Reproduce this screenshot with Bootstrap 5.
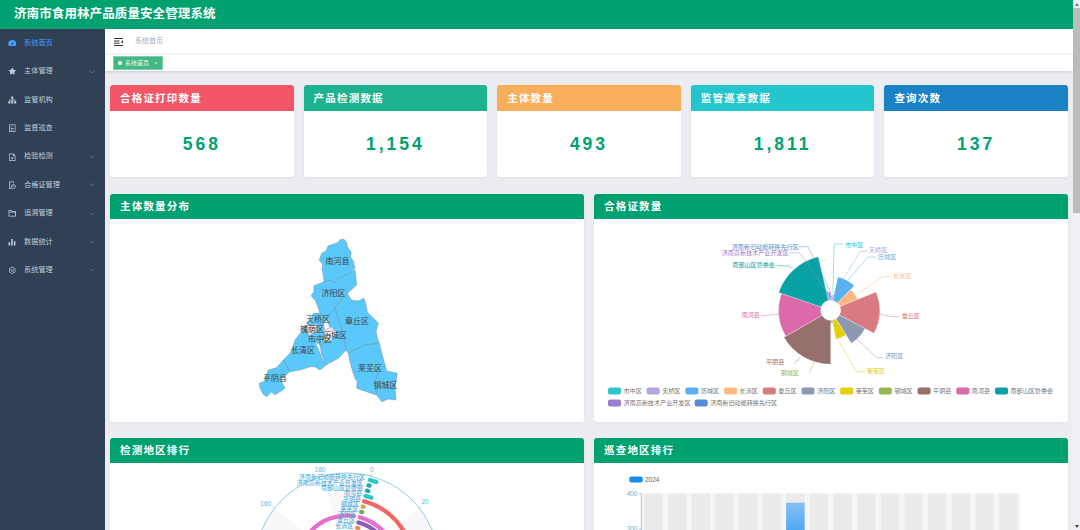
<!DOCTYPE html>
<html lang="zh-CN">
<head>
    <meta charset="UTF-8">
    <title>济南市食用林产品质量安全管理系统</title>
    <link href="https://cdn.jsdelivr.net/npm/bootstrap@5.3.0/dist/css/bootstrap.min.css" rel="stylesheet">
    <style>
        html, body { height: 530px; overflow: hidden; }
        body { font-family: "Liberation Sans", "Noto Sans CJK SC", sans-serif; background: #fff; }
        .page-wrap { height: 530px; width: 1080px; }
        .page-main { width: 1073px; }
        .scroll-rail { width: 7px; height: 530px; background: #f0f0f3; }
        .scroll-thumb { height: 205px; background: #bcbcbc; }
        .scroll-btn { height: 8px; font-size: 0; }
        .scroll-up { width: 0; height: 0; border: 2px solid transparent; border-bottom: 3px solid #777; border-top: 0; }
        .scroll-down { width: 0; height: 0; border: 2px solid transparent; border-top: 3px solid #444; border-bottom: 0; }
        .top-head { height: 29px; background: #00a170; color: #fff; font-size: 12.5px; font-weight: 700; line-height: 28px; padding-left: 14px; letter-spacing: .1px; }
        .side-menu { width: 105px; background: #304156; height: 501px; }
        .side-item { height: 28.4px; color: #bfcbd9; font-size: 7.2px; padding-left: 8px; gap: 7.500px; }
        .side-item.on { color: #409eff; }
        .side-item svg.ic { width: 8.500px; height: 8.500px; flex: none; fill: currentColor; }
        .side-item .arr { margin-left: auto; margin-right: 10px; width: 6px; height: 4px; }
        .crumb-bar { height: 25px; padding-left: 9px; gap: 12px; color: #a4b1c4; font-size: 7px; }
        .tag-bar { height: 17px; padding-left: 8px; border-top: 1px solid #f2f2f2; box-shadow: 0 1px 3px rgba(0,0,0,.14); position: relative; }
        .tag-on { height: 14px; width: 50px; background: #42b983; color: #e9f7f0; font-size: 6px; gap: 3px; padding-left: 4px; border: 1px solid #7fd0ab; }
        .tag-dot { width: 4px; height: 4px; background: #fff; border-radius: 50%; }
        .tag-x { font-size: 6px; margin-left: 2px; opacity: .8; }
        .content-area { background: #ebedf2; padding: 14px 5px 0 5px; height: 459px; overflow: hidden; }
        .stat-row { gap: 10px; margin-bottom: 17px; }
        .stat-box { flex: 1 1 0; height: 92px; background: #fff; border-radius: 3px; overflow: hidden; box-shadow: 0 1px 3px rgba(0,0,0,.05); }
        .stat-head { height: 26px; color: #fff; font-size: 10.500px; font-weight: 700; line-height: 26px; padding-left: 10px; letter-spacing: 1.200px; }
        .stat-num { height: 66px; color: #00a170; font-size: 17.500px; font-weight: 700; letter-spacing: 3px; }
        .chart-row { gap: 10px; margin-bottom: 16px; }
        .chart-box { flex: 1 1 0; background: #fff; border-radius: 3px; overflow: hidden; box-shadow: 0 1px 3px rgba(0,0,0,.05); }
        .chart-head { height: 25px; background: #00a170; color: #fff; font-size: 10.500px; font-weight: 700; line-height: 25px; padding-left: 10px; letter-spacing: 1.200px; }
        .chart-box svg { display: block; }
        .bg-a { background: #f25767; }
        .bg-b { background: #1eb38e; }
        .bg-c { background: #f9ae5b; }
        .bg-d { background: #22c6cc; }
        .bg-e { background: #1c82c6; }
        svg text { font-family: "Liberation Sans", "Noto Sans CJK SC", sans-serif; }
    </style>
</head>
<body>
<div class="page-wrap d-flex">
    <div class="page-main">
        <div class="top-head">济南市食用林产品质量安全管理系统</div>
        <div class="d-flex">
            <div class="side-menu">
                <div class="side-item on d-flex align-items-center"><svg class="ic" viewBox="0 0 16 16"><path d="M8 2a7.500 7.500 0 0 0-7.500 7.500c0 1.200.3 2.400.9 3.500h13.200c.6-1.100.9-2.300.9-3.500A7.500 7.500 0 0 0 8 2zm0 9a1.500 1.500 0 0 1-1-2.600L11 6 9.300 10A1.500 1.500 0 0 1 8 11z" fill-rule="evenodd"/></svg>系统首页</div>
                <div class="side-item d-flex align-items-center"><svg class="ic" viewBox="0 0 16 16"><path d="M8 .500l2.300 4.900 5.200.6-3.800 3.600 1 5.200L8 12.300l-4.700 2.500 1-5.200L.5 6l5.200-.6z"/></svg>主体管理<svg class="arr" viewBox="0 0 6 4"><path d="M.5.500 3 3 5.500.500" fill="none" stroke="#6f7d8e" stroke-width=".7"/></svg></div>
                <div class="side-item d-flex align-items-center"><svg class="ic" viewBox="0 0 16 16"><path d="M6 1h4v4H9v2h5v3h1.500v4h-4v-4H13V8.500H8.700V10H10v4H6v-4h1.300V8.500H3V10h1.500v4h-4v-4H2V7h5V5H6z"/></svg>监管机构</div>
                <div class="side-item d-flex align-items-center"><svg class="ic" viewBox="0 0 16 16"><path d="M2 1h12v14H2zm1.300 1.300v11.400h9.400V2.300zM5 5h3v1.200H5zm0 3h6v1.200H5zm0 2.800h4V12H5z" fill-rule="evenodd"/></svg>监督巡查</div>
                <div class="side-item d-flex align-items-center"><svg class="ic" viewBox="0 0 16 16"><path d="M2 1h8l4 4v10H2zm1.300 1.300v11.400h9.400V5.600H9.400V2.300zM5 9l1-1 1.500 1.500L10.500 7l1 1-4 4z" fill-rule="evenodd"/></svg>检验检测<svg class="arr" viewBox="0 0 6 4"><path d="M.5.500 3 3 5.500.500" fill="none" stroke="#6f7d8e" stroke-width=".7"/></svg></div>
                <div class="side-item d-flex align-items-center"><svg class="ic" viewBox="0 0 16 16"><path d="M2 1h9v3h-1.300V2.300H3.300v11.400H6V15H2zm8 5a4.500 4.500 0 1 1 0 9 4.500 4.500 0 0 1 0-9zm0 1.300a3.200 3.200 0 1 0 0 6.400 3.200 3.200 0 0 0 0-6.400zM8.500 10H11v1.200H8.500z" fill-rule="evenodd"/></svg>合格证管理<svg class="arr" viewBox="0 0 6 4"><path d="M.5.500 3 3 5.500.500" fill="none" stroke="#6f7d8e" stroke-width=".7"/></svg></div>
                <div class="side-item d-flex align-items-center"><svg class="ic" viewBox="0 0 16 16"><path d="M1 2h6l1.500 2H15v10H1zm1.300 1.300v1.900h11V5.300H7.700L6.300 3.300zm0 3.200v6.200h11V6.500z" fill-rule="evenodd"/></svg>追溯管理<svg class="arr" viewBox="0 0 6 4"><path d="M.5.500 3 3 5.500.500" fill="none" stroke="#6f7d8e" stroke-width=".7"/></svg></div>
                <div class="side-item d-flex align-items-center"><svg class="ic" viewBox="0 0 16 16"><path d="M1 8h3v6H1zm5-6h3v12H6zm5 4h3v8h-3z"/></svg>数据统计<svg class="arr" viewBox="0 0 6 4"><path d="M.5.500 3 3 5.500.500" fill="none" stroke="#6f7d8e" stroke-width=".7"/></svg></div>
                <div class="side-item d-flex align-items-center"><svg class="ic" viewBox="0 0 16 16"><path d="M8 1l6 3.500v7L8 15l-6-3.500v-7zm0 1.500L3.300 5.200v5.600L8 13.500l4.700-2.700V5.200zM8 5a3 3 0 1 1 0 6 3 3 0 0 1 0-6zm0 1.300a1.700 1.700 0 1 0 0 3.400 1.700 1.700 0 0 0 0-3.400z" fill-rule="evenodd"/></svg>系统管理<svg class="arr" viewBox="0 0 6 4"><path d="M.5.500 3 3 5.500.500" fill="none" stroke="#6f7d8e" stroke-width=".7"/></svg></div>
            </div>
            <div class="flex-grow-1">
                <div class="crumb-bar d-flex align-items-center bg-white">
                    <svg width="9" height="8" viewBox="0 0 9 8"><path d="M0 .500h9M0 3h5.500M0 5.200h5.500M0 7.500h9" stroke="#333" stroke-width="1" fill="none"/><path d="M9 2.200v3.400L6.800 3.900z" fill="#333"/></svg>
                    <span>系统首页</span>
                </div>
                <div class="tag-bar bg-white d-flex align-items-center">
                    <div class="tag-on d-flex align-items-center"><span class="tag-dot"></span>系统首页<span class="tag-x">×</span></div>
                </div>
                <div class="content-area">
                    <div class="stat-row d-flex">
                        <div class="stat-box"><div class="stat-head bg-a">合格证打印数量</div><div class="stat-num d-flex align-items-center justify-content-center">568</div></div>
                        <div class="stat-box"><div class="stat-head bg-b">产品检测数据</div><div class="stat-num d-flex align-items-center justify-content-center">1,154</div></div>
                        <div class="stat-box"><div class="stat-head bg-c">主体数量</div><div class="stat-num d-flex align-items-center justify-content-center">493</div></div>
                        <div class="stat-box"><div class="stat-head bg-d">监管巡查数据</div><div class="stat-num d-flex align-items-center justify-content-center">1,811</div></div>
                        <div class="stat-box"><div class="stat-head bg-e">查询次数</div><div class="stat-num d-flex align-items-center justify-content-center">137</div></div>
                    </div>
                    <div class="chart-row d-flex">
                        <div class="chart-box">
                            <div class="chart-head">主体数量分布</div>
                            <svg id="mapChart" width="474" height="203" viewBox="110 219 474 203"></svg>
                        </div>
                        <div class="chart-box">
                            <div class="chart-head">合格证数量</div>
                            <svg id="roseChart" width="473" height="203" viewBox="594 219 473 203"></svg>
                        </div>
                    </div>
                    <div class="chart-row d-flex">
                        <div class="chart-box">
                            <div class="chart-head">检测地区排行</div>
                            <svg id="polarChart" width="474" height="200" viewBox="110 463 474 200"></svg>
                        </div>
                        <div class="chart-box">
                            <div class="chart-head">巡查地区排行</div>
                            <svg id="barChart" width="473" height="200" viewBox="594 463 473 200"></svg>
                        </div>
                    </div>
                </div>
            </div>
        </div>
    </div>
    <div class="scroll-rail d-flex flex-column">
        <div class="scroll-btn d-flex align-items-center justify-content-center"><span class="scroll-up"></span></div>
        <div class="scroll-thumb"></div>
        <div class="scroll-btn mt-auto d-flex align-items-center justify-content-center"><span class="scroll-down"></span></div>
    </div>
</div>
<script src="https://cdn.jsdelivr.net/npm/bootstrap@5.3.0/dist/js/bootstrap.bundle.min.js"></script>
<script>
    const NS = 'http://www.w3.org/2000/svg';
    function add(svg, tag, attrs, txt) {
        const el = document.createElementNS(NS, tag);
        Object.keys(attrs).forEach(k => el.setAttribute(k, attrs[k]));
        if (txt) el.textContent = txt;
        svg.appendChild(el);
        return el;
    }
    function polar(cx, cy, r, a) {
        const t = (a - 90) * Math.PI / 180;
        return (cx + r * Math.cos(t)).toFixed(1) + ' ' + (cy + r * Math.sin(t)).toFixed(1);
    }
    function sector(cx, cy, r0, r1, a0, a1) {
        const big = a1 - a0 > 180 ? 1 : 0;
        return 'M' + polar(cx, cy, r0, a0) + 'A' + r0 + ' ' + r0 + ' 0 ' + big + ' 1 ' + polar(cx, cy, r0, a1) +
               'L' + polar(cx, cy, r1, a1) + 'A' + r1 + ' ' + r1 + ' 0 ' + big + ' 0 ' + polar(cx, cy, r1, a0) + 'Z';
    }
    function arc(cx, cy, r, a0, a1) {
        const big = a1 - a0 > 180 ? 1 : 0;
        return 'M' + polar(cx, cy, r, a0) + 'A' + r + ' ' + r + ' 0 ' + big + ' 1 ' + polar(cx, cy, r, a1);
    }

    // map: points read from the reference, in crop coordinates
    const mapSvg = document.getElementById('mapChart');
    const toPage = pts => pts.map(p => (240 + p[0] / 3).toFixed(1) + ',' + (225 + p[1] / 3).toFixed(1)).join(' ');
    const regions = [
        [[265,62],[280,58],[295,52],[300,44],[312,43],[320,52],[322,66],[334,82],[331,96],[340,108],[345,130],[330,145],[300,158],[285,172],[268,167],[252,170],[250,150],[246,135],[248,118],[238,105],[245,85],[258,78]],
        [[222,182],[252,170],[268,167],[285,172],[300,158],[330,145],[345,135],[350,180],[322,205],[305,222],[285,250],[258,280],[240,265],[232,240],[225,225],[213,212],[222,200]],
        [[322,205],[335,226],[355,228],[372,220],[378,240],[382,262],[396,275],[415,295],[408,318],[412,340],[418,355],[375,360],[325,385],[318,375],[310,330],[300,295],[285,250],[305,222]],
        [[325,385],[375,360],[418,355],[425,385],[435,420],[415,440],[405,470],[410,510],[392,505],[380,500],[350,490],[352,470],[345,460],[335,430],[330,410]],
        [[435,420],[440,438],[472,445],[465,490],[468,525],[445,522],[425,530],[410,510],[405,470],[415,440]],
        [[220,265],[240,265],[258,280],[250,300],[205,305],[200,295],[212,285]],
        [[198,300],[205,335],[225,350],[240,385],[245,400],[258,420],[240,435],[225,425],[210,425],[180,435],[150,440],[130,405],[150,385],[160,362],[165,345],[185,320]],
        [[258,280],[285,250],[300,295],[310,330],[318,375],[295,400],[258,420],[245,390],[240,360],[260,350],[280,330]],
        [[58,475],[72,470],[85,435],[110,428],[130,405],[150,440],[120,462],[135,490],[105,510],[95,500],[80,515],[70,508],[60,490]],
        [[205,305],[250,300],[258,330],[260,350],[240,360],[225,350],[205,335]]
    ];
    regions.forEach(pts => {
        add(mapSvg, 'polygon', { points: toPage(pts), fill: '#5ac8fa', stroke: '#6f8ea0', 'stroke-width': '.5' });
    });
    [[[197,302],[228,298],[232,318],[206,332]], [[250,316],[275,305],[290,325],[270,350],[252,345]]].forEach(pts => {
        add(mapSvg, 'polygon', { points: toPage(pts), fill: '#e6e6e6', stroke: '#8a8a8a', 'stroke-width': '.4' });
    });
    [['南河县',337.500,264],['济阳区',333.500,296],['天桥区',318,322],['槐荫区',312,332],['章丘区',357,323.500],['市中区',320,342],['历城区',335,338],['长清区',303,353],['莱芜区',370,371],['钢城区',385.500,388],['平阴县',275,381]].forEach(l => {
        add(mapSvg, 'text', { x: l[1], y: l[2], 'font-size': 8, fill: '#444', 'text-anchor': 'middle' }, l[0]);
    });

    // rose chart, radius mode; angles and radii read from the reference
    const roseSvg = document.getElementById('roseChart');
    const cx = 830.7, cy = 310.3;
    const rose = [
        ['市中区', '#2ec7c9', 0, 6, 15, 845, 246.500, [[843,244],[834,244],[833,293]]],
        ['天桥区', '#b6a2de', 6, 12, 16, 869, 252, [[868,251],[860,251.700],[841.700,281.700]]],
        ['历城区', '#5ab1ef', 12, 44, 34, 878, 259, [[876.700,257],[868,257],[848,280]]],
        ['长清区', '#ffb980', 44, 68, 29, 893, 278, [[891.700,276.700],[883,276.700],[859,293]]],
        ['章丘区', '#d87a80', 68, 118, 49, 901.700, 318, [[900,316.700],[891.700,316.700],[880,314]]],
        ['济阳区', '#8d98b3', 118, 148, 39, 885, 358, [[883,357.700],[876.700,357.700],[857,339]]],
        ['莱芜区', '#e5cf0d', 148, 170, 29, 866.700, 373, [[865,371.700],[856.700,371.700],[837,338]]],
        ['钢城区', '#97b552', 170, 180, 13, 780.700, 375, [[809,373],[813,365],[829,322]]],
        ['平阴县', '#95706d', 180, 240, 54, 766, 364, [[795,363],[800.700,356.700]]],
        ['南河县', '#dc69aa', 240, 289, 52, 741.700, 317, [[761.700,315.700],[780,314]]],
        ['南部山区管委会', '#07a2a4', 289, 347, 55, 732.300, 267, [[776.700,265.700],[787,265.700],[793,268]]],
        ['济南高新技术产业开发区', '#9a7fd1', 347, 353, 19, 721.700, 255, [[790,252.700],[800,253],[828,293]]],
        ['济南新旧动能转换先行区', '#588dd5', 353, 360, 18, 731.700, 249, [[799,246.700],[808,246.700],[831,293]]]
    ];
    rose.forEach(d => {
        add(roseSvg, 'path', { d: sector(cx, cy, 10, d[4], d[2], d[3]), fill: d[1], stroke: '#fff', 'stroke-width': '.3' });
        add(roseSvg, 'polyline', { points: d[7].map(p => p.join(',')).join(' '), fill: 'none', stroke: d[1], 'stroke-width': '.6', opacity: '.8' });
        add(roseSvg, 'text', { x: d[5], y: d[6], 'font-size': 6.100, fill: d[1] }, d[0]);
    });
    // legend rows
    let lx = 608;
    rose.forEach((d, i) => {
        const ly = i < 11 ? 391 : 403;
        if (i === 11) lx = 608;
        add(roseSvg, 'rect', { x: lx, y: ly - 3.500, width: 13, height: 7, rx: 2, fill: d[1] });
        add(roseSvg, 'text', { x: lx + 15.500, y: ly + 2, 'font-size': 6.100, fill: '#777' }, d[0]);
        lx += 15 + d[0].length * 6 + 5.700;
    });

    // polar bars, cut off by the fold of the page
    const polarSvg = document.getElementById('polarChart');
    const pcx = 347, pcy = 565, pr = 92;
    add(polarSvg, 'circle', { cx: pcx, cy: pcy, r: pr, fill: '#fff' });
    [[345, 375], [52, 89], [271, 308]].forEach(s => {
        add(polarSvg, 'path', { d: sector(pcx, pcy, 1, pr, s[0], s[1]), fill: '#f8f8f8' });
    });
    add(polarSvg, 'circle', { cx: pcx, cy: pcy, r: pr, fill: 'none', stroke: '#74bfe0', 'stroke-width': '.8' });
    [['0', 371.700, 471.500, 15], ['20', 425, 504, 52], ['160', 265.700, 505.500, 308], ['180', 320, 471.500, 345]].forEach(t => {
        add(polarSvg, 'text', { x: t[1], y: t[2], 'font-size': 6.500, fill: '#5bb4dc', 'text-anchor': 'middle' }, t[0]);
        const r = t[3] * Math.PI / 180;
        add(polarSvg, 'line', { x1: pcx + pr * Math.sin(r), y1: pcy - pr * Math.cos(r), x2: pcx + (pr + 2.500) * Math.sin(r), y2: pcy - (pr + 2.500) * Math.cos(r), stroke: '#74bfe0', 'stroke-width': '.7' });
    });
    const rings = [
        ['#2ec7c9', 88, 19.500, '济南新旧动能转换先行区', 365, 478.500], ['#1fa8ad', 82.500, 16, '济南高新技术产业开发区', 362.700, 485],
        ['#1fa8ad', 77, 16, '南部山区管委会', 363, 490], ['#2ec7c9', 71.500, 20, '南河县', 362, 495],
        ['#f4665f', 66, 125, '平阴县', 361, 501], ['#d9a53a', 60.500, 16, '钢城区', 359, 506], ['#5fb35f', 55, 16, '莱芜区', 358.300, 511],
        ['#e56fd0', 49.500, 368, '济阳区', 356, 516], ['#8e5bb5', 44, 110, '章丘区', 355, 522], ['#f0894c', 38.500, 17, '长清区', 353.300, 528]
    ];
    rings.forEach(d => {
        add(polarSvg, 'path', { d: arc(pcx, pcy, d[1], 15, d[2]), fill: 'none', stroke: d[0], 'stroke-width': 4.200, 'stroke-linecap': 'round' });
    });
    rings.forEach(d => {
        add(polarSvg, 'text', { x: d[4], y: d[5], 'font-size': 6, fill: '#4aa3d8', 'text-anchor': 'end' }, d[3]);
    });

    // bar chart
    const barSvg = document.getElementById('barChart');
    add(barSvg, 'rect', { x: 629.300, y: 476.500, width: 13.400, height: 6, rx: 2, fill: '#1a8cf0' });
    add(barSvg, 'text', { x: 645, y: 481.500, 'font-size': 6.500, fill: '#666' }, '2024');
    add(barSvg, 'line', { x1: 641.300, y1: 493.500, x2: 641.300, y2: 540, stroke: '#67b7dc', 'stroke-width': '.7' });
    [[400, 493.500], [300, 529]].forEach(t => {
        add(barSvg, 'text', { x: 637.500, y: t[1] + 2, 'font-size': 6.500, fill: '#5bb4dc', 'text-anchor': 'end' }, t[0]);
        add(barSvg, 'line', { x1: 639, y1: t[1], x2: 641.300, y2: t[1], stroke: '#67b7dc', 'stroke-width': '.7' });
    });
    const grad = add(barSvg, 'linearGradient', { id: 'barFill', x1: 0, y1: 0, x2: 0, y2: 1 });
    add(grad, 'stop', { offset: 0, 'stop-color': '#83bff6' });
    add(grad, 'stop', { offset: 1, 'stop-color': '#188df0' });
    add(barSvg, 'rect', { x: 642, y: 493.500, width: 378, height: 50, fill: '#f6f6f6' });
    for (let i = 0; i < 16; i++) {
        const x = 644.300 + i * 23.640;
        add(barSvg, 'rect', { x: x, y: 493.500, width: 18.500, height: 50, fill: '#ebebeb' });
        if (i === 6) add(barSvg, 'rect', { x: x, y: 502.700, width: 18.500, height: 60, fill: 'url(#barFill)' });
    }
</script>
</body>
</html>
